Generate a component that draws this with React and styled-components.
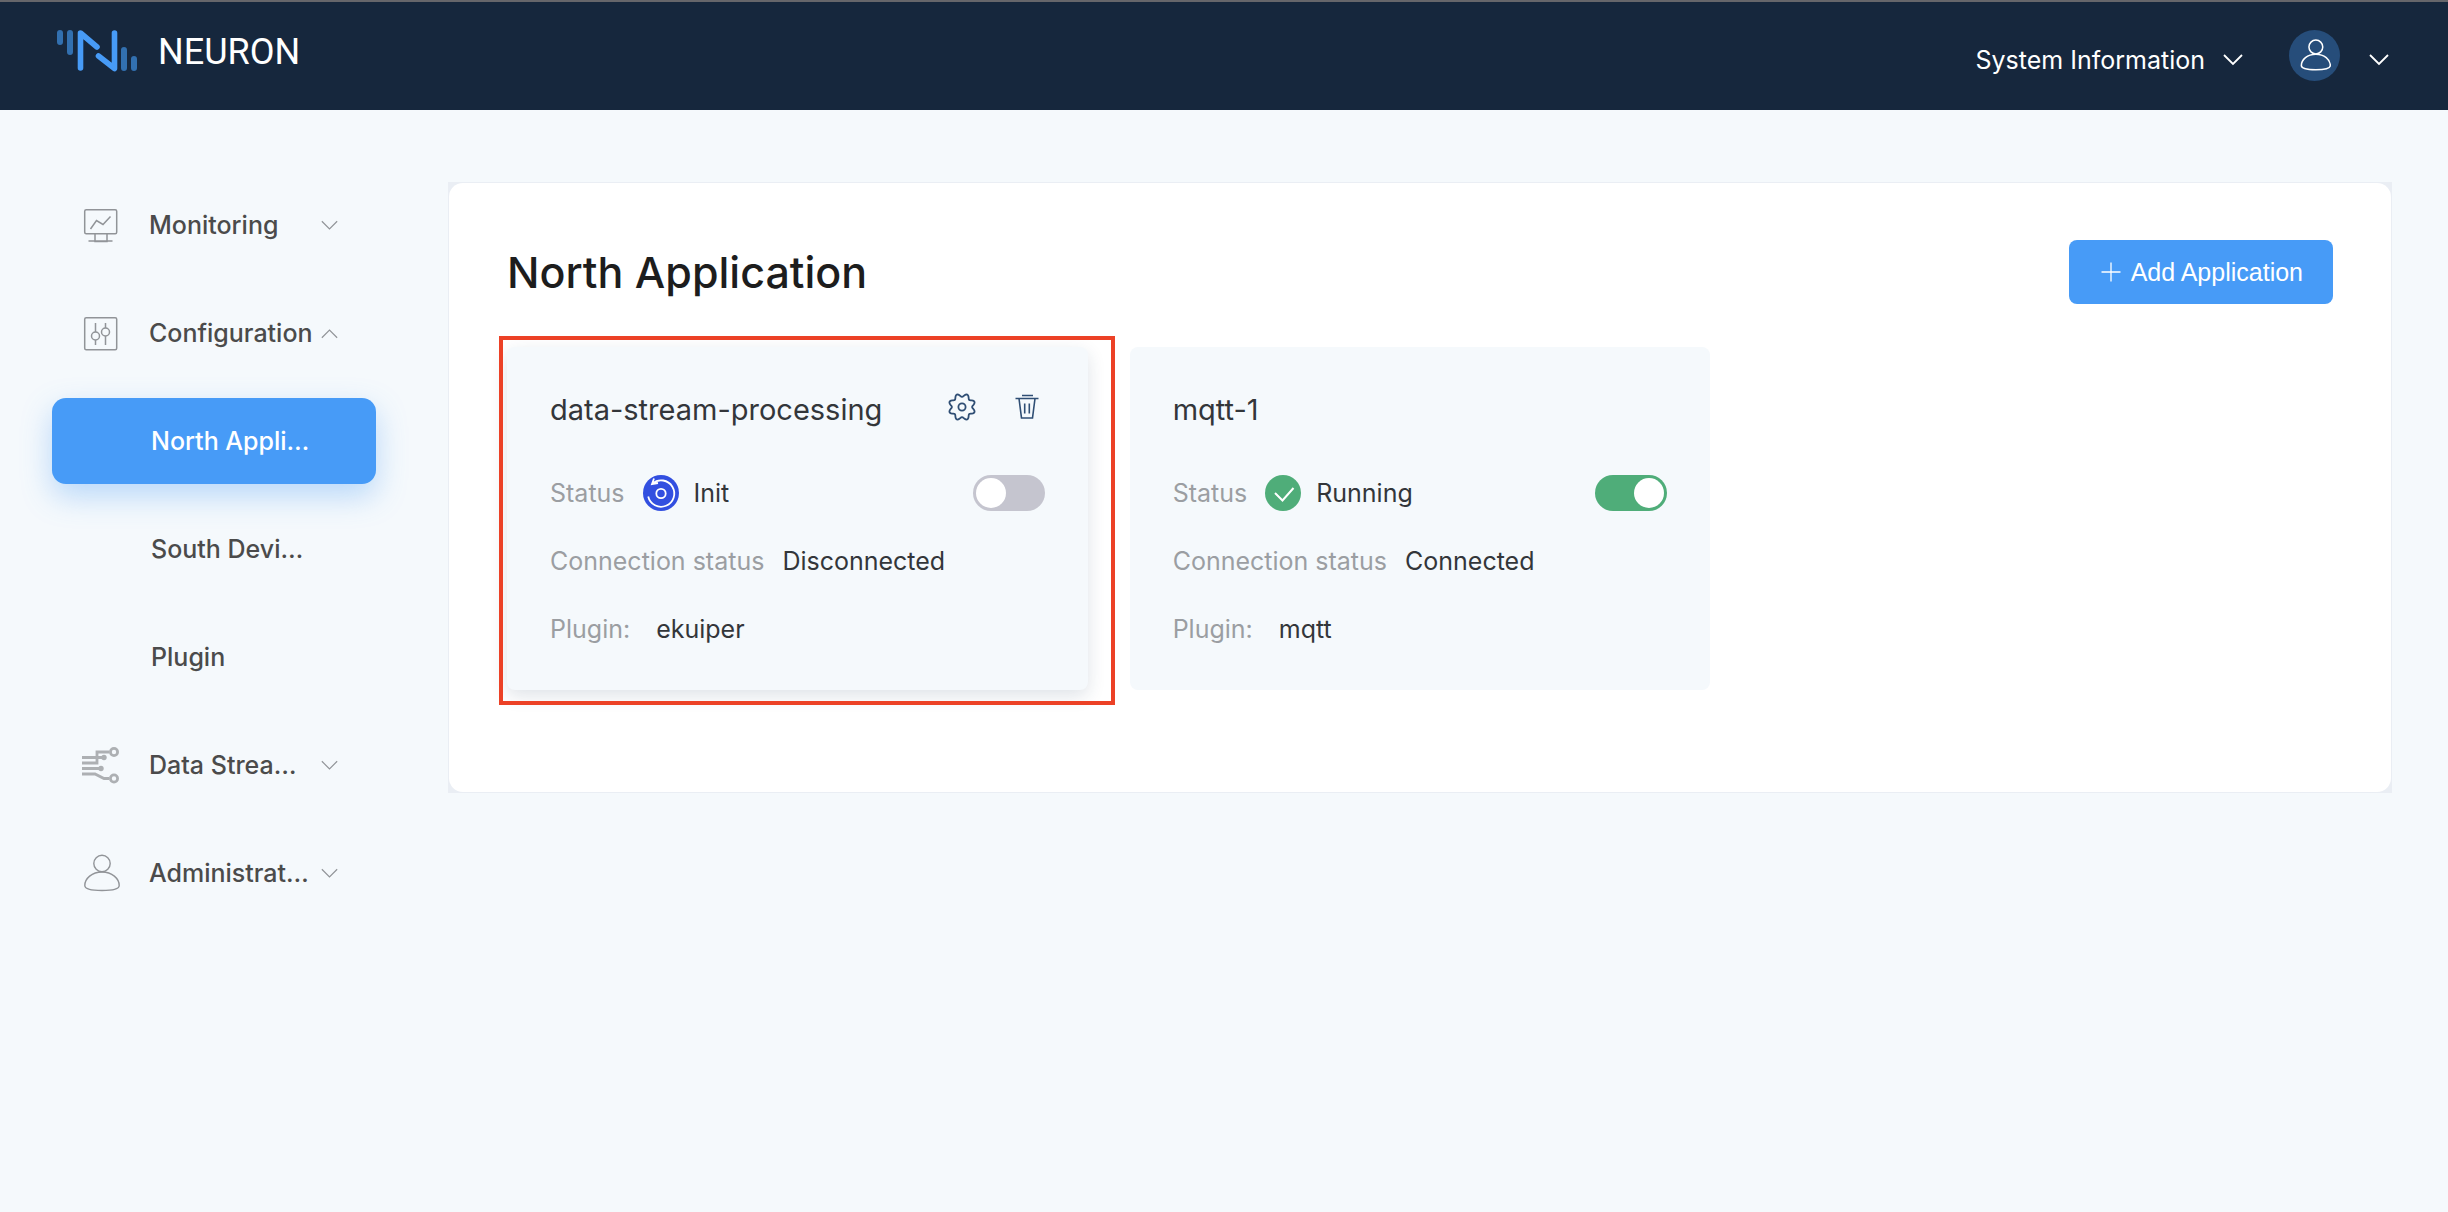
import React, { useState } from 'react';
import styled, { createGlobalStyle, css } from 'styled-components';

const GlobalStyle = createGlobalStyle`
  * {
    box-sizing: border-box;
  }
  body {
    margin: 0;
    background: #f5f9fc;
    color: #33363a;
    font-family: Inter, 'Liberation Sans', sans-serif;
    font-size: 25px;
  }
  button {
    font: inherit;
    color: inherit;
    border: none;
    background: none;
    padding: 0;
    cursor: pointer;
  }
`;

const Header = styled.header`
  display: flex;
  justify-content: space-between;
  align-items: flex-start;
  height: 110px;
  padding: 0 59px 0 56px;
  background: #16273d;
  border-top: 2px solid #66666b;
  color: #fff;
`;

const Brand = styled.a`
  display: flex;
  align-items: center;
  gap: 18px;
  height: 100px;
  color: #fff;
  font-family: Roboto, sans-serif;
  font-size: 36px;
  text-decoration: none;
`;

const HeaderActions = styled.div`
  display: flex;
  align-items: center;
  gap: 46px;
  height: 108px;
`;

const HeaderButton = styled.button`
  display: flex;
  align-items: center;
  gap: ${({ $gap }) => $gap};
  height: 108px;
  padding-top: 8px;
`;

const Avatar = styled.span`
  display: flex;
  align-items: center;
  justify-content: center;
  width: 51px;
  height: 51px;
  margin-bottom: 10px;
  border-radius: 50%;
  background: #264d7a;
`;

const Layout = styled.div`
  display: flex;
  align-items: flex-start;
  gap: 72px;
  padding: 72px 56px 72px 52px;
`;

const Sidebar = styled.nav`
  display: flex;
  flex-direction: column;
  gap: 22px;
  flex: 0 0 324px;
`;

const menuItem = css`
  display: flex;
  align-items: center;
  height: 86px;
  border-radius: 14px;
  color: #4b4b4b;
  font-weight: 500;
  white-space: nowrap;
`;

const MenuButton = styled.button`
  ${menuItem}
  padding: 0 38px 0 30px;
  text-align: left;
  color: #4b4b4b;
  font-weight: 500;

  svg {
    color: #919498;
  }
`;

const MenuIcon = styled.span`
  display: flex;
  width: 67px;
`;

const MenuLabel = styled.span`
  flex: 1;
`;

const MenuLink = styled.a`
  ${menuItem}
  padding: 0 38px 0 99px;
  text-decoration: none;
  ${({ $active }) => $active && css`
    background: #479bf7;
    color: #fff;
    box-shadow: 0 12px 30px rgba(71, 155, 247, 0.35);
  `}
`;

/* the frame shows only as a hairline and in the corners */
const PanelFrame = styled.div`
  flex: 1;
  padding: 1px;
  background: #eaeef4;
`;

const Panel = styled.main`
  padding: 57px 58px 102px;
  background: #fff;
  border-radius: 14px;
`;

const PanelHead = styled.div`
  display: flex;
  align-items: center;
  justify-content: space-between;
  margin-bottom: 43px;
`;

const Title = styled.h1`
  margin: 0;
  color: #1d1d1d;
  font-size: 43px;
  font-weight: 500;
`;

const AddButton = styled.button`
  display: flex;
  align-items: center;
  gap: 10px;
  height: 64px;
  padding: 0 30px 0 32px;
  border-radius: 8px;
  background: #479bf7;
  color: #fff;
  font-family: 'Liberation Sans', Arial, sans-serif;
`;

const CardGrid = styled.div`
  display: grid;
  grid-template-columns: repeat(3, 1fr);
  gap: 42px;
`;

const Card = styled.article`
  position: relative;
  padding: 28px 43px 27px;
  border-radius: 8px;
  background: #f5f9fc;
  ${({ $raised }) => $raised && css`
    box-shadow: 0 6px 18px rgba(30, 60, 90, 0.14);
  `}
`;

const Highlight = styled.div`
  position: absolute;
  inset: -11px -27px -15px -8px;
  border: 4px solid #ec4126;
  pointer-events: none;
`;

const CardHead = styled.div`
  display: flex;
  align-items: center;
  justify-content: space-between;
  height: 68px;
  margin-bottom: 16px;
`;

const CardName = styled.h2`
  margin: 0;
  font-size: 29px;
  font-weight: 400;
`;

const CardTools = styled.div`
  display: flex;
  gap: 38px;
  padding: 0 5px 4px 0;
`;

const ToolButton = styled.button`
  display: flex;
  color: #2f4e74;
`;

const Row = styled.div`
  display: flex;
  align-items: center;
  gap: ${({ $gap }) => $gap || '18px'};
  height: 68px;
`;

const Muted = styled.span`
  color: #9b9ea2;
`;

const Status = styled.span`
  display: flex;
  align-items: center;
  gap: 15px;
`;

const Switch = styled.input`
  appearance: none;
  display: flex;
  align-items: center;
  width: 72px;
  height: 36px;
  margin: 0 0 0 auto;
  padding: 0 3px;
  border-radius: 18px;
  background: #c5c5cf;
  cursor: pointer;

  &::before {
    content: '';
    width: 30px;
    height: 30px;
    border-radius: 50%;
    background: #fff;
  }
  &:checked {
    justify-content: flex-end;
    background: #4fad79;
  }
`;

const Logo = () => (
  <svg width="84" height="46" viewBox="0 0 84 46" fill="none" strokeLinecap="round" strokeLinejoin="round" strokeWidth="6">
    <g stroke="#3270b0">
      <path d="M4 4v9M14 4v19M68 21v18M78 30v9" />
    </g>
    <g stroke="#479bf7" strokeWidth="5.6">
      <path d="M24.500 39V4l16.500 14M42.500 27l16 12.500V4" />
    </g>
  </svg>
);

const Chevron = ({ up, size = 20, width = 1.8 }) => (
  <svg width={size} height={size} viewBox="0 0 20 20" fill="none" stroke="currentColor" strokeWidth={width}>
    <path d={up ? 'M1 15l9-9 9 9' : 'M1 5l9 9 9-9'} />
  </svg>
);

const UserIcon = ({ size = 38, width = 1.4 }) => (
  <svg width={size} height={size} viewBox="0 0 38 38" fill="none" stroke="currentColor" strokeWidth={width}>
    <circle cx="20" cy="9.500" r="8.200" />
    <path d="M20 18c-10 0-17.200 6.500-17.200 13.500 0 3.400 6 5 17.200 5s17.200-1.600 17.200-5C37.200 24.500 30 18 20 18z" />
  </svg>
);

const MonitorIcon = () => (
  <svg width="38" height="38" viewBox="0 0 38 38" fill="none" stroke="currentColor" strokeWidth="1.5">
    <rect x="2.700" y="3.700" width="32" height="24" rx="1.500" />
    <path d="M8.500 23l6-8.500 6.500 4 7.500-8M13 28v7.500h12V28M6.500 35h24" />
  </svg>
);

const SlidersIcon = () => (
  <svg width="38" height="38" viewBox="0 0 38 38" fill="none" stroke="currentColor" strokeWidth="1.500">
    <rect x="2.700" y="3.700" width="32" height="32" rx="1.500" />
    <circle cx="13.500" cy="22" r="4" />
    <circle cx="23.500" cy="18" r="4" />
    <path d="M13.500 9v9M13.500 26v5M23.500 9v5M23.500 22v9" />
  </svg>
);

const StreamIcon = () => (
  <svg width="38" height="38" viewBox="0 0 38 38" fill="none" stroke="#adb0b3" strokeWidth="2.800">
    <path d="M0 11.500h20M0 17h15V6h12M0 22.500h18M0 28h13l9 4.500h5" />
    <circle cx="22" cy="11.500" r="2.700" fill="#adb0b3" stroke="none" />
    <circle cx="19" cy="22.500" r="2.700" fill="#adb0b3" stroke="none" />
    <circle cx="32" cy="6" r="3.600" />
    <circle cx="32" cy="32.500" r="3.600" />
  </svg>
);

const PlusIcon = () => (
  <svg width="20" height="20" viewBox="0 0 20 20" stroke="currentColor" strokeWidth="1.300">
    <path d="M10 0.500v19M0.500 10h19" />
  </svg>
);

// eight soft teeth round the hub
const gearPoints = Array.from({ length: 96 }, (_, i) => {
  const a = (i / 96) * Math.PI * 2;
  const r = 11.8 - 1.7 * Math.cos(8 * a);
  return `${(14 + r * Math.cos(a)).toFixed(2)},${(14 + r * Math.sin(a)).toFixed(2)}`;
}).join(' ');

const GearIcon = () => (
  <svg width="28" height="28" viewBox="0 0 28 28" fill="none" stroke="currentColor" strokeWidth="1.800" strokeLinejoin="round">
    <circle cx="14" cy="14" r="3.600" />
    <polygon points={gearPoints} />
  </svg>
);

const TrashIcon = () => (
  <svg width="26" height="28" viewBox="0 0 26 28" fill="none" stroke="currentColor" strokeWidth="1.600">
    <path d="M8 2.500h11M1.500 5.500h23M5 5.500l2.500 19.500h11L21 5.500M10.700 10.500v10M15.300 10.500v10" />
  </svg>
);

const InitIcon = () => (
  <svg width="36" height="36" viewBox="0 0 36 36" fill="none" stroke="#fff" strokeWidth="1.800">
    <circle cx="18" cy="18" r="18" fill="#324fe0" stroke="none" />
    <circle cx="18" cy="18.500" r="4.700" />
    <path d="M5.200 21.500A13.200 13.200 0 1 0 9.500 8.500M11 3.500L9 9l6-1" />
  </svg>
);

const RunningIcon = () => (
  <svg width="36" height="36" viewBox="0 0 36 36" fill="none" stroke="#fff" strokeWidth="2">
    <circle cx="18" cy="18" r="18" fill="#4fad79" stroke="none" />
    <path d="M10 18l7.500 7.500L28.500 13" />
  </svg>
);

const NODES = [
  { name: 'data-stream-processing', status: 'Init', connection: 'Disconnected', plugin: 'ekuiper', selected: true },
  { name: 'mqtt-1', status: 'Running', connection: 'Connected', plugin: 'mqtt', selected: false },
];

function MenuGroup({ icon, label, open }) {
  return (
    <MenuButton type="button" aria-expanded={!!open}>
      <MenuIcon>{icon}</MenuIcon>
      <MenuLabel>{label}</MenuLabel>
      <Chevron up={open} size={17} width={1.4} />
    </MenuButton>
  );
}

function NodeCard({ node }) {
  const [on, setOn] = useState(node.status === 'Running');

  return (
    <Card $raised={node.selected}>
      <CardHead>
        <CardName>{node.name}</CardName>
        {node.selected && (
          <CardTools>
            <ToolButton type="button" aria-label="Settings"><GearIcon /></ToolButton>
            <ToolButton type="button" aria-label="Delete"><TrashIcon /></ToolButton>
          </CardTools>
        )}
      </CardHead>
      <Row>
        <Muted>Status</Muted>
        <Status>
          {node.status === 'Running' ? <RunningIcon /> : <InitIcon />}
          {node.status}
        </Status>
        <Switch
          type="checkbox"
          role="switch"
          aria-label={node.name}
          checked={on}
          onChange={(e) => setOn(e.target.checked)}
        />
      </Row>
      <Row>
        <Muted>Connection status</Muted>
        <span>{node.connection}</span>
      </Row>
      <Row $gap="26px">
        <Muted>Plugin:</Muted>
        <span>{node.plugin}</span>
      </Row>
      {node.selected && <Highlight />}
    </Card>
  );
}

function App() {
  return (
    <>
      <GlobalStyle />
      <Header>
        <Brand href="#">
          <Logo />
          NEURON
        </Brand>
        <HeaderActions>
          <HeaderButton type="button" $gap="18px">
            System Information
            <Chevron />
          </HeaderButton>
          <HeaderButton type="button" aria-label="Account" $gap="29px">
            <Avatar><UserIcon size={32} width={1.8} /></Avatar>
            <Chevron />
          </HeaderButton>
        </HeaderActions>
      </Header>
      <Layout>
        <Sidebar>
          <MenuGroup icon={<MonitorIcon />} label="Monitoring" />
          <MenuGroup icon={<SlidersIcon />} label="Configuration" open />
          <MenuLink href="#north" $active>North Appli…</MenuLink>
          <MenuLink href="#south">South Devi…</MenuLink>
          <MenuLink href="#plugin">Plugin</MenuLink>
          <MenuGroup icon={<StreamIcon />} label="Data Strea…" />
          <MenuGroup icon={<UserIcon />} label="Administrat…" />
        </Sidebar>
        <PanelFrame>
          <Panel>
            <PanelHead>
              <Title>North Application</Title>
              <AddButton type="button">
                <PlusIcon />
                Add Application
              </AddButton>
            </PanelHead>
            <CardGrid>
              {NODES.map((node) => (
                <NodeCard key={node.name} node={node} />
              ))}
            </CardGrid>
          </Panel>
        </PanelFrame>
      </Layout>
    </>
  );
}

export default App;
